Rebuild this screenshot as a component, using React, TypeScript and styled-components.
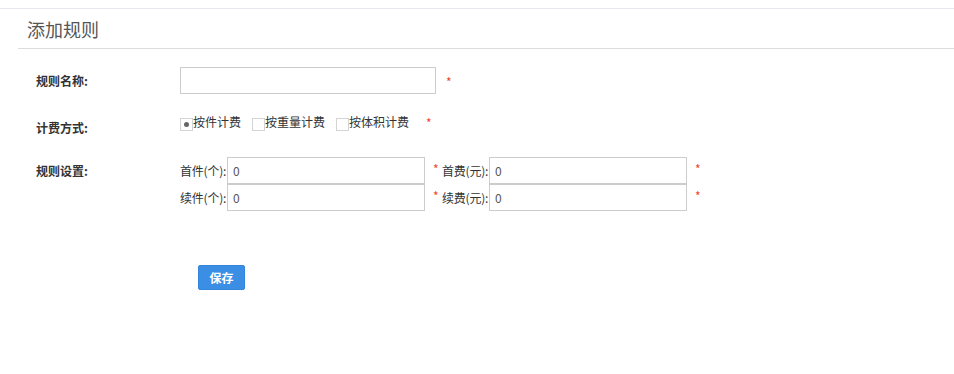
import React from "react";
import styled, { createGlobalStyle } from "styled-components";

const Global = createGlobalStyle`
  html, body { margin: 0; padding: 0; background: #fff; }
  body {
    font-family: "Noto Sans CJK SC", "Liberation Sans", sans-serif;
    font-size: 12px;
    color: #333;
  }
`;

const Page = styled.div`
  margin-top: 8px;
  border-top: 1px solid #e7e7ef;
`;

const Header = styled.div`
  margin-left: 18px;
  height: 39px;
  border-bottom: 1px solid #dddddd;
  display: flex;
  align-items: center;
  padding-left: 9px;
`;

const Title = styled.h2`
  margin: 0;
  font-size: 18px;
  font-weight: normal;
  color: #555;
  line-height: 24px;
`;

const Form = styled.div`
  padding-left: 36px;
  display: flex;
  flex-direction: column;
`;

const Row = styled.div<{ $top: number; $h: number; $align?: string }>`
  display: flex;
  margin-top: ${(p) => p.$top}px;
  min-height: ${(p) => p.$h}px;
  align-items: ${(p) => p.$align || "center"};
`;

const Label = styled.div<{ $center?: boolean }>`
  width: 144px;
  flex: none;
  font-weight: bold;
  color: #333;
  font-size: 12px;
  line-height: 14px;
  align-self: ${(p) => (p.$center === false ? "flex-start" : "center")};
`;

const TextInput = styled.input<{ $w: number }>`
  box-sizing: border-box;
  width: ${(p) => p.$w}px;
  height: 27px;
  border: 1px solid #cccccc;
  padding: 0 5px;
  margin: 0;
  font-family: inherit;
  font-size: 12px;
  color: #555;
  outline: none;
  background: #fff;
`;

const Star = styled.span<{ $ml: number; $mt?: number }>`
  color: #f2442a;
  margin-left: ${(p) => p.$ml}px;
  margin-top: ${(p) => p.$mt || 0}px;
  font-size: 12px;
  line-height: 12px;
  align-self: flex-start;
`;

const Options = styled.div`
  display: flex;
  align-items: flex-start;
`;

const Option = styled.label`
  display: flex;
  align-items: flex-start;
  margin-right: 11px;
  cursor: pointer;
`;

const Box = styled.span<{ $checked?: boolean }>`
  box-sizing: border-box;
  width: 13px;
  height: 13px;
  margin-top: 3px;
  border: 1px solid #d4d4d4;
  background: #fff;
  display: flex;
  align-items: center;
  justify-content: center;
  &::after {
    content: "";
    display: ${(p) => (p.$checked ? "block" : "none")};
    width: 5px;
    height: 5px;
    border-radius: 50%;
    background: #666;
  }
`;

const OptText = styled.span`
  line-height: 14px;
  color: #333;
`;

const Settings = styled.div`
  display: flex;
  flex-direction: column;
`;

const SetLine = styled.div`
  display: flex;
  align-items: center;
  height: 27px;
`;

const SetLabel = styled.span`
  width: 47px;
  color: #333;
  white-space: nowrap;
  line-height: 14px;
  letter-spacing: -0.2px;
`;

const InlineStar = styled.span`
  color: #f2442a;
  margin-left: 8px;
  width: 9px;
  line-height: 12px;
  align-self: center;
  margin-top: -4px;
`;

const ButtonRow = styled.div`
  padding-left: 162px;
  margin-top: 54px;
`;

const SaveButton = styled.button`
  box-sizing: border-box;
  width: 47px;
  height: 25px;
  border: 1px solid #3486dc;
  border-radius: 2px;
  background: #3a8ee4;
  color: #fff;
  font-family: inherit;
  font-size: 12px;
  font-weight: bold;
  padding: 0;
  cursor: pointer;
`;

const options = [
  { text: "按件计费", checked: true },
  { text: "按重量计费", checked: false },
  { text: "按体积计费", checked: false },
];

export default function App() {
  return (
    <>
      <Global />
      <Page>
        <Header>
          <Title>添加规则</Title>
        </Header>
        <Form>
          <Row $top={18} $h={27}>
            <Label>规则名称:</Label>
            <TextInput $w={256} />
            <Star $ml={10} $mt={9}>*</Star>
          </Row>
          <Row $top={21} $h={26} $align="flex-start">
            <Label style={{ marginTop: 6 }} $center={false}>计费方式:</Label>
            <Options>
              {options.map((o) => (
                <Option key={o.text}>
                  <Box $checked={o.checked} />
                  <OptText>{o.text}</OptText>
                </Option>
              ))}
              <Star $ml={6} $mt={2}>*</Star>
            </Options>
          </Row>
          <Row $top={16} $h={54} $align="flex-start">
            <Label style={{ marginTop: 7 }} $center={false}>规则设置:</Label>
            <Settings>
              <SetLine>
                <SetLabel>首件(个):</SetLabel>
                <TextInput $w={198} defaultValue="0" />
                <InlineStar>*</InlineStar>
                <SetLabel>首费(元):</SetLabel>
                <TextInput $w={198} defaultValue="0" />
                <InlineStar>*</InlineStar>
              </SetLine>
              <SetLine>
                <SetLabel>续件(个):</SetLabel>
                <TextInput $w={198} defaultValue="0" />
                <InlineStar>*</InlineStar>
                <SetLabel>续费(元):</SetLabel>
                <TextInput $w={198} defaultValue="0" />
                <InlineStar>*</InlineStar>
              </SetLine>
            </Settings>
          </Row>
          <ButtonRow>
            <SaveButton>保存</SaveButton>
          </ButtonRow>
        </Form>
      </Page>
    </>
  );
}
